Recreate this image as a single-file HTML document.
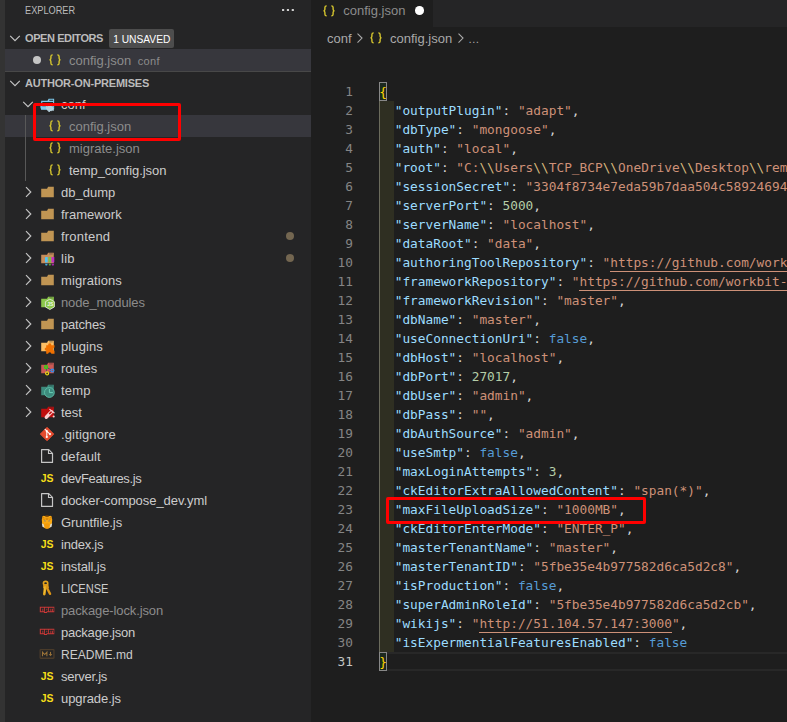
<!DOCTYPE html>
<html lang="en"><head><meta charset="utf-8"><title>config.json - author-on-premises</title>
<style>
*{box-sizing:border-box;margin:0;padding:0}
html,body{width:787px;height:722px;overflow:hidden;background:#1e1e1e}
body{position:relative;font-family:"Liberation Sans",sans-serif;font-size:13px;color:#ccc;-webkit-font-smoothing:antialiased}
.act{position:absolute;left:0;top:0;width:5px;height:722px;background:#333}
.side{position:absolute;left:5px;top:0;width:306px;height:722px;background:#252526;overflow:hidden}
.ttl{position:absolute;left:20px;top:3px;font-size:11px;line-height:14px;color:#bbb;transform-origin:0 0;transform:scaleX(.835);white-space:nowrap}
.more{position:absolute;left:276px;top:0;font-size:16px;line-height:16px;color:#c5c5c5;letter-spacing:1px;font-weight:700}
.hdr{position:absolute;left:0;width:306px;height:22px;font-size:11px;font-weight:700;line-height:22px;color:#bbb}
.hdr span.t{position:absolute;left:20px;top:0;white-space:nowrap}
.badge{position:absolute;left:104px;top:2px;width:65px;height:19px;border-radius:2px;background:#4d4d4d;color:#fff;font-weight:400;font-size:11px;line-height:20px;text-align:center}
.row{position:absolute;left:0;width:306px;height:22px}
.row.sel{background:#37373d}
.ic{position:absolute;overflow:visible}
.lbl{position:absolute;top:1px;line-height:22px;white-space:nowrap;color:#ccc}
.lbl.dim{color:#8c8c8c}
.desc{font-size:11px;color:#8c8c8c;margin-left:6.5px;letter-spacing:.35px}
.dot{position:absolute;left:281px;top:7px;width:8px;height:8px;border-radius:50%;background:#736650}
.guide{position:absolute;left:20px;top:115px;width:1px;height:66px;background:#585858}
.udot{position:absolute;border-radius:50%}
.ed{position:absolute;left:311px;top:0;width:476px;height:722px;background:#1e1e1e;overflow:hidden}
.tabs{position:absolute;left:0;top:0;width:476px;height:27px;background:#252526}
.tab{position:absolute;left:0;top:0;width:122px;height:27px;background:#1e1e1e}
.tab .lbl{left:32.3px;top:0px;color:#8c8c8c}
.bc{position:absolute;left:0;top:27px;width:476px;height:22px;line-height:22px;color:#a9a9a9}
.bc span{position:absolute;top:1px;white-space:nowrap}
.ln{position:absolute;left:0;width:42px;height:19px;text-align:right;color:#858585}
.ln.cur{color:#c6c6c6}
.ln,.cl{font-family:"DejaVu Sans Mono","Liberation Mono",monospace;font-size:12.8px;line-height:19px;letter-spacing:-0.006px;white-space:pre}
.cl{position:absolute;left:68.3px;height:19px;color:#d4d4d4}
.k{color:#9cdcfe}.s{color:#ce9178}.n{color:#b5cea8}.b{color:#569cd6}.p{color:#d4d4d4}.e{color:#d7ba7d}.br{color:#ffd700}
.u{display:inline-block;height:19px;vertical-align:top;border-bottom:1px solid #ce9178}
.band{position:absolute;left:68px;top:101px;width:15px;height:551px;background:#2f2f22;border-left:1px solid #6b6b5c}
.curline{position:absolute;left:68px;top:652px;width:408px;height:19px;border-top:2px solid #282828;border-bottom:2px solid #282828}
.bm{position:absolute;left:68px;width:8px;height:19px;border:1px solid #888;background:#1c291f}
.red{position:absolute;border:3px solid #ff0000;border-radius:2px}
</style></head><body>
<div class="act"></div>
<div class="side">
  <div class="ttl">EXPLORER</div>
  <svg class="ic" style="left:276px;top:2px" width="16" height="16" viewBox="0 0 16 16"><rect x="1" y="6.900" width="2.200" height="2.200" rx=".4" fill="#d0d0d0"/><rect x="5.850" y="6.900" width="2.200" height="2.200" rx=".4" fill="#d0d0d0"/><rect x="10.700" y="6.900" width="2.200" height="2.200" rx=".4" fill="#d0d0d0"/></svg>
  <div class="hdr" style="top:27px"><svg class="ic" style="left:2px;top:3px" width="16" height="16" viewBox="0 0 16 16"><path d="M3.2 5.8L8 10.6 12.8 5.8" fill="none" stroke="#c5c5c5" stroke-width="1.15"/></svg><span class="t" style="letter-spacing:-0.41px">OPEN EDITORS</span><span class="badge"><span style="display:inline-block;transform:scaleX(.93)">1 UNSAVED</span></span></div>
  <div class="row sel" style="top:49px"><i class="udot" style="left:28px;top:6.700px;width:8px;height:8px;background:#c5c5c5"></i><svg class="ic" style="left:42px;top:3px" width="16" height="16" viewBox="0 0 16 16"><path d="M5.700 2.900C4.300 2.900 3.900 3.500 3.900 4.600V6.300C3.900 7.300 3.400 7.750 2.600 7.900 3.400 8.050 3.900 8.500 3.900 9.500V11.200C3.900 12.300 4.300 12.900 5.700 12.900" fill="none" stroke="#d6c62e" stroke-width="1.400"/><path d="M10.300 2.900C11.700 2.900 12.100 3.500 12.100 4.600V6.300C12.100 7.300 12.600 7.750 13.400 7.900 12.600 8.050 12.100 8.500 12.100 9.500V11.200C12.100 12.300 11.700 12.900 10.300 12.900" fill="none" stroke="#d6c62e" stroke-width="1.400"/></svg><span class="lbl dim" style="left:64px">config.json<span class="desc">conf</span></span></div>
  <div class="hdr" style="top:71px;border-top:1px solid #484848"><svg class="ic" style="left:2px;top:3px" width="16" height="16" viewBox="0 0 16 16"><path d="M3.2 5.8L8 10.6 12.8 5.8" fill="none" stroke="#c5c5c5" stroke-width="1.15"/></svg><span class="t" style="top:0px;letter-spacing:-0.2px">AUTHOR-ON-PREMISES</span></div>
<div class="row" style="top:93px"><svg class="ic" style="left:15px;top:3px" width="16" height="16" viewBox="0 0 16 16"><path d="M3.2 5.8L8 10.6 12.8 5.8" fill="none" stroke="#c5c5c5" stroke-width="1.15"/></svg><svg class="ic" style="left:34px;top:3px" width="16" height="16" viewBox="0 0 32 32"><path d="M28.2,5.5H19.2L17.1,9.7H4.3V26.5H30.3V5.5Zm0,18.7H6.6V11.8H28.2Zm0-14.5H20.2l1-2.1h7Z" fill="#7ec9ec"/><path d="M27.7,20.5H2.2L4.3,27.5H30.3Z" fill="#7ec9ec"/><path d="M22.5 16.5l1.6 2.2 2.6-.9 1.4 2.3 2.7.3.2 2.7 2.3 1.4-1 2.5 1.6 2.2-1.9 1.9-2.3-1.3-2 1.9-2.5-1-.9 2.6-2.7-.3-.6-2.6-2.7-.4-.1-2.7-2.4-1.3 1-2.5-1.6-2.2 2-1.8 2.3 1.300 2-1.800 2.500 1z" fill="#b4cfdb" transform="translate(-0.5 2.2) scale(.9)"/></svg><span class="lbl" style="left:56px">conf</span></div>
<div class="row sel" style="top:115px"><svg class="ic" style="left:42px;top:3px" width="16" height="16" viewBox="0 0 16 16"><path d="M5.700 2.900C4.300 2.900 3.900 3.500 3.900 4.600V6.300C3.900 7.300 3.400 7.750 2.600 7.900 3.400 8.050 3.900 8.500 3.900 9.500V11.200C3.900 12.300 4.300 12.900 5.700 12.900" fill="none" stroke="#d6c62e" stroke-width="1.400"/><path d="M10.300 2.900C11.700 2.900 12.100 3.500 12.100 4.600V6.300C12.100 7.300 12.600 7.750 13.400 7.900 12.600 8.050 12.100 8.500 12.100 9.500V11.200C12.100 12.300 11.700 12.900 10.300 12.900" fill="none" stroke="#d6c62e" stroke-width="1.400"/></svg><span class="lbl dim" style="left:64px">config.json</span></div>
<div class="row" style="top:137px"><svg class="ic" style="left:42px;top:3px" width="16" height="16" viewBox="0 0 16 16"><path d="M5.700 2.900C4.300 2.900 3.900 3.500 3.900 4.600V6.300C3.900 7.300 3.400 7.750 2.600 7.900 3.400 8.050 3.900 8.500 3.900 9.500V11.200C3.900 12.300 4.300 12.900 5.700 12.900" fill="none" stroke="#d6c62e" stroke-width="1.400"/><path d="M10.300 2.900C11.700 2.900 12.100 3.500 12.100 4.600V6.300C12.100 7.300 12.600 7.750 13.400 7.900 12.600 8.050 12.100 8.500 12.100 9.500V11.200C12.100 12.300 11.700 12.900 10.300 12.900" fill="none" stroke="#d6c62e" stroke-width="1.400"/></svg><span class="lbl dim" style="left:64px">migrate.json</span></div>
<div class="row" style="top:159px"><svg class="ic" style="left:42px;top:3px" width="16" height="16" viewBox="0 0 16 16"><path d="M5.700 2.900C4.300 2.900 3.900 3.500 3.900 4.600V6.300C3.900 7.300 3.400 7.750 2.600 7.900 3.400 8.050 3.900 8.500 3.900 9.500V11.200C3.900 12.300 4.300 12.900 5.700 12.900" fill="none" stroke="#d6c62e" stroke-width="1.400"/><path d="M10.300 2.900C11.700 2.900 12.100 3.500 12.100 4.600V6.300C12.100 7.300 12.600 7.750 13.400 7.900 12.600 8.050 12.100 8.500 12.100 9.500V11.200C12.100 12.300 11.700 12.900 10.300 12.900" fill="none" stroke="#d6c62e" stroke-width="1.400"/></svg><span class="lbl" style="left:64px;letter-spacing:-0.06px">temp_config.json</span></div>
<div class="row" style="top:181px"><svg class="ic" style="left:14.5px;top:3px" width="16" height="16" viewBox="0 0 16 16"><path d="M6 3.2L10.8 8 6 12.8" fill="none" stroke="#c5c5c5" stroke-width="1.15"/></svg><svg class="ic" style="left:34px;top:3px" width="16" height="16" viewBox="0 0 32 32"><path d="M27.5,5.5H18.2L16.1,9.7H4.4V26.5H29.6V5.5Z" fill="#c09553"/></svg><span class="lbl" style="left:56px">db_dump</span></div>
<div class="row" style="top:203px"><svg class="ic" style="left:14.5px;top:3px" width="16" height="16" viewBox="0 0 16 16"><path d="M6 3.2L10.8 8 6 12.8" fill="none" stroke="#c5c5c5" stroke-width="1.15"/></svg><svg class="ic" style="left:34px;top:3px" width="16" height="16" viewBox="0 0 32 32"><path d="M27.5,5.5H18.2L16.1,9.7H4.4V26.5H29.6V5.5Z" fill="#c09553"/></svg><span class="lbl" style="left:56px">framework</span></div>
<div class="row" style="top:225px"><svg class="ic" style="left:14.5px;top:3px" width="16" height="16" viewBox="0 0 16 16"><path d="M6 3.2L10.8 8 6 12.8" fill="none" stroke="#c5c5c5" stroke-width="1.15"/></svg><svg class="ic" style="left:34px;top:3px" width="16" height="16" viewBox="0 0 32 32"><path d="M27.5,5.5H18.2L16.1,9.7H4.4V26.5H29.6V5.5Z" fill="#c09553"/></svg><span class="lbl" style="left:56px;letter-spacing:0.19px">frontend</span><i class="dot"></i></div>
<div class="row" style="top:247px"><svg class="ic" style="left:14.5px;top:3px" width="16" height="16" viewBox="0 0 16 16"><path d="M6 3.2L10.8 8 6 12.8" fill="none" stroke="#c5c5c5" stroke-width="1.15"/></svg><svg class="ic" style="left:34px;top:3px" width="16" height="16" viewBox="0 0 32 32"><path d="M27.5,5.5H18.2L16.1,9.7H4.4V26.5H29.6V5.5Z" fill="#c68d5b"/><rect x="20.5" y="7.200" width="7" height="1.300" fill="#252526" opacity=".75"/><rect x="12" y="14" width="5.4" height="11" rx="0.8" fill="#4fc3f7"/><rect x="19.2" y="14" width="5" height="11" rx="0.8" fill="#7bc043"/><rect x="25" y="14" width="5.6" height="11" rx="0.8" fill="#c030c0"/><path d="M12 27.6h5.4l-1.2 3.2h-3z" fill="#3fa9dc"/><path d="M19.2 27.6h5l-1.100 3.200h-2.800z" fill="#68a838"/><path d="M25 27.600h5.600l-1.200 3.200h-3.200z" fill="#a828a8"/></svg><span class="lbl" style="left:56px;letter-spacing:0.26px">lib</span><i class="dot"></i></div>
<div class="row" style="top:269px"><svg class="ic" style="left:14.5px;top:3px" width="16" height="16" viewBox="0 0 16 16"><path d="M6 3.2L10.8 8 6 12.8" fill="none" stroke="#c5c5c5" stroke-width="1.15"/></svg><svg class="ic" style="left:34px;top:3px" width="16" height="16" viewBox="0 0 32 32"><path d="M27.5,5.5H18.2L16.1,9.7H4.4V26.5H29.6V5.5Z" fill="#c09553"/></svg><span class="lbl" style="left:56px;letter-spacing:0.1px">migrations</span></div>
<div class="row" style="top:291px"><svg class="ic" style="left:14.5px;top:3px" width="16" height="16" viewBox="0 0 16 16"><path d="M6 3.2L10.8 8 6 12.8" fill="none" stroke="#c5c5c5" stroke-width="1.15"/></svg><svg class="ic" style="left:34px;top:3px" width="16" height="16" viewBox="0 0 32 32"><path d="M27.5,5.5H18.2L16.1,9.7H4.4V26.5H29.6V5.5Z" fill="#8cc84b"/><rect x="20.5" y="7.200" width="7" height="1.300" fill="#252526" opacity=".75"/><path d="M21.800 10.200l9 5.200v10.400l-9 5.200-9-5.200v-10.400z" fill="#8cc84b" stroke="#e4ecdc" stroke-width="1.700" stroke-linejoin="round"/><text x="22.6" y="24.6" font-family="Liberation Sans,sans-serif" font-size="10" font-weight="700" fill="#eef6e6" text-anchor="middle">JS</text></svg><span class="lbl dim" style="left:56px;letter-spacing:-0.12px">node_modules</span></div>
<div class="row" style="top:313px"><svg class="ic" style="left:14.5px;top:3px" width="16" height="16" viewBox="0 0 16 16"><path d="M6 3.2L10.8 8 6 12.8" fill="none" stroke="#c5c5c5" stroke-width="1.15"/></svg><svg class="ic" style="left:34px;top:3px" width="16" height="16" viewBox="0 0 32 32"><path d="M27.5,5.5H18.2L16.1,9.7H4.4V26.5H29.6V5.5Z" fill="#c09553"/></svg><span class="lbl" style="left:56px;letter-spacing:-0.18px">patches</span></div>
<div class="row" style="top:335px"><svg class="ic" style="left:14.5px;top:3px" width="16" height="16" viewBox="0 0 16 16"><path d="M6 3.2L10.8 8 6 12.8" fill="none" stroke="#c5c5c5" stroke-width="1.15"/></svg><svg class="ic" style="left:34px;top:3px" width="16" height="16" viewBox="0 0 32 32"><path d="M27.5,5.5H18.2L16.1,9.7H4.4V26.5H29.6V5.5Z" fill="#fdbe63"/><rect x="20.5" y="7.200" width="7" height="1.300" fill="#252526" opacity=".75"/><path d="M14.4 14.600H18.500A3.100 3.100 0 1 1 24.500 14.600H31V19A3.200 3.200 0 1 0 31 25.400V31.500H24.700A3.200 3.200 0 1 0 18.300 31.500H14.400V25.200A3.100 3.100 0 1 1 14.400 19Z" fill="#ef7000"/></svg><span class="lbl" style="left:56px;letter-spacing:0.1px">plugins</span></div>
<div class="row" style="top:357px"><svg class="ic" style="left:14.5px;top:3px" width="16" height="16" viewBox="0 0 16 16"><path d="M6 3.2L10.8 8 6 12.8" fill="none" stroke="#c5c5c5" stroke-width="1.15"/></svg><svg class="ic" style="left:34px;top:3px" width="16" height="16" viewBox="0 0 32 32"><path d="M27.5,5.5H18.2L16.1,9.7H4.4V26.5H29.6V5.5Z" fill="#cb5a55"/><rect x="20.5" y="7.200" width="7" height="1.300" fill="#252526" opacity=".75"/><path d="M14.100 14.300L16.200 26.800M14.100 14.300L26.900 21M16.200 26.800L26.900 21" stroke="#3a3f78" stroke-width="1.500" fill="none"/><circle cx="14.100" cy="14.300" r="2.900" fill="#b0703a" stroke="#22e010" stroke-width="2.400"/><circle cx="26.900" cy="21" r="2.900" fill="#c0504a" stroke="#2f90ee" stroke-width="2.400"/><circle cx="16.200" cy="26.800" r="2.900" fill="#3a2a10" stroke="#f2dc1a" stroke-width="2.400"/></svg><span class="lbl" style="left:56px">routes</span></div>
<div class="row" style="top:379px"><svg class="ic" style="left:14.5px;top:3px" width="16" height="16" viewBox="0 0 16 16"><path d="M6 3.2L10.8 8 6 12.8" fill="none" stroke="#c5c5c5" stroke-width="1.15"/></svg><svg class="ic" style="left:34px;top:3px" width="16" height="16" viewBox="0 0 32 32"><path d="M27.5,5.5H18.2L16.1,9.7H4.4V26.5H29.6V5.5Z" fill="#3d8b7d"/><rect x="20.5" y="7.200" width="7" height="1.300" fill="#252526" opacity=".75"/><circle cx="20.800" cy="21" r="9.800" fill="#3d8b7d" stroke="#5fc0a9" stroke-width="1.800"/><path d="M20.800 14v7.200h7" stroke="#6fd6bd" stroke-width="1.800" fill="none"/></svg><span class="lbl" style="left:56px;letter-spacing:0.2px">temp</span></div>
<div class="row" style="top:401px"><svg class="ic" style="left:14.5px;top:3px" width="16" height="16" viewBox="0 0 16 16"><path d="M6 3.2L10.8 8 6 12.8" fill="none" stroke="#c5c5c5" stroke-width="1.15"/></svg><svg class="ic" style="left:34px;top:3px" width="16" height="16" viewBox="0 0 32 32"><path d="M27.5,5.5H18.2L16.1,9.7H4.4V26.5H29.6V5.5Z" fill="#c00e0e"/><rect x="20.5" y="7.200" width="7" height="1.300" fill="#252526" opacity=".75"/><path d="M25 15.500L14.500 26.500" stroke="#f9cfcf" stroke-width="6.600" stroke-linecap="round"/><path d="M25.500 15L20.500 20" stroke="#c00e0e" stroke-width="3.200"/><path d="M21.500 10.800L30.200 17.600" stroke="#f9cfcf" stroke-width="2.200" stroke-linecap="round"/><circle cx="29.400" cy="25" r="2.100" fill="#f9cfcf"/></svg><span class="lbl" style="left:56px">test</span></div>
<div class="row" style="top:423px"><svg class="ic" style="left:34px;top:3px" width="16" height="16" viewBox="0 0 32 32"><path d="M16.100 2.700L29.500 16.100 16.100 29.500 2.700 16.100z" fill="#e44c30" stroke="#e44c30" stroke-width="2" stroke-linejoin="round"/><path d="M11.500 6l4.100 4.100v12M15.600 10.100l6.300 6" stroke="#fff" stroke-width="2.100" fill="none"/><circle cx="15.600" cy="10.300" r="2.100" fill="#fff"/><circle cx="15.600" cy="22" r="2.200" fill="#fff"/><circle cx="22" cy="16.200" r="2.200" fill="#fff"/></svg><span class="lbl" style="left:56px;letter-spacing:0.14px">.gitignore</span></div>
<div class="row" style="top:445px"><svg class="ic" style="left:34px;top:3px" width="16" height="16" viewBox="0 0 32 32"><path d="M5.200 3.200H19.500L27 10.800V28.800H5.200Z" fill="none" stroke="#c5c5c5" stroke-width="2.400" stroke-linejoin="round"/><path d="M19 3.500V11H26.500" fill="none" stroke="#c5c5c5" stroke-width="2.200"/></svg><span class="lbl" style="left:56px;letter-spacing:0.11px">default</span></div>
<div class="row" style="top:467px"><svg class="ic" style="left:34px;top:3px" width="16" height="16" viewBox="0 0 32 32"><text x="3.400" y="24.200" font-family="Liberation Sans,sans-serif" font-size="21.800" font-weight="700" fill="#f5de19" textLength="25.600" lengthAdjust="spacingAndGlyphs">JS</text></svg><span class="lbl" style="left:56px;letter-spacing:-0.35px">devFeatures.js</span></div>
<div class="row" style="top:489px"><svg class="ic" style="left:34px;top:3px" width="16" height="16" viewBox="0 0 32 32"><path d="M5.200 3.200H19.500L27 10.800V28.800H5.200Z" fill="none" stroke="#c5c5c5" stroke-width="2.400" stroke-linejoin="round"/><path d="M19 3.500V11H26.500" fill="none" stroke="#c5c5c5" stroke-width="2.200"/></svg><span class="lbl" style="left:56px;letter-spacing:-0.05px">docker-compose_dev.yml</span></div>
<div class="row" style="top:511px"><svg class="ic" style="left:34px;top:3px" width="16" height="16" viewBox="0 0 32 32"><path d="M7 4.500Q9 2.500 11.500 4Q16 2.500 20.500 4Q23 2.500 25 4.500L26.400 11L25.800 19L22.500 27Q16 32 9.500 27L6.200 19L5.600 11Z" fill="#f9a812"/><path d="M12 3.300Q16 1.800 20 3.300L19 5.500H13Z" fill="#6a3a08"/><path d="M6.500 5.500L11 8M25.500 5.500L21 8M7 9.500L11.500 11M25 9.500L20.500 11M13 8.500H19M13.500 10.800H18.500" stroke="#c67608" stroke-width="1.300"/><path d="M10.500 20L11.500 27Q16 31 20.500 27L21.500 20Q16 17 10.500 20Z" fill="#f29a0c"/><path d="M5.800 18.500L6.800 25.500L10.800 27.200L9.600 21Z" fill="#e2dccd"/><path d="M26.200 18.500L25.200 25.500L21.200 27.200L22.400 21Z" fill="#e2dccd"/><ellipse cx="11.700" cy="13.800" rx="1.900" ry="1.300" fill="#9a8468" transform="rotate(25 11.700 13.800)"/><ellipse cx="20.300" cy="13.800" rx="1.900" ry="1.300" fill="#9a8468" transform="rotate(-25 20.300 13.800)"/></svg><span class="lbl" style="left:56px;letter-spacing:-0.09px">Gruntfile.js</span></div>
<div class="row" style="top:533px"><svg class="ic" style="left:34px;top:3px" width="16" height="16" viewBox="0 0 32 32"><text x="3.400" y="24.200" font-family="Liberation Sans,sans-serif" font-size="21.800" font-weight="700" fill="#f5de19" textLength="25.600" lengthAdjust="spacingAndGlyphs">JS</text></svg><span class="lbl" style="left:56px;letter-spacing:-0.22px">index.js</span></div>
<div class="row" style="top:555px"><svg class="ic" style="left:34px;top:3px" width="16" height="16" viewBox="0 0 32 32"><text x="3.400" y="24.200" font-family="Liberation Sans,sans-serif" font-size="21.800" font-weight="700" fill="#f5de19" textLength="25.600" lengthAdjust="spacingAndGlyphs">JS</text></svg><span class="lbl" style="left:56px;letter-spacing:-0.15px">install.js</span></div>
<div class="row" style="top:577px"><svg class="ic" style="left:34px;top:3px" width="16" height="16" viewBox="0 0 32 32"><ellipse cx="13.200" cy="6.300" rx="4.300" ry="3.600" fill="none" stroke="#e5a51e" stroke-width="3.200"/><path d="M8.300 8.500H18.600L20 16.500H8.300Z" fill="#dc981a"/><path d="M12.200 15L10.600 28.300" stroke="#e8aa20" stroke-width="5.200" stroke-linecap="round"/><path d="M15.500 15L22 27.600" stroke="#dc9416" stroke-width="5" stroke-linecap="round"/><path d="M12 13L11 26" stroke="#f6cf4a" stroke-width="1.200"/></svg><span class="lbl" style="left:56px;transform-origin:0 50%;transform:scaleX(0.853)">LICENSE</span></div>
<div class="row" style="top:599px"><svg class="ic" style="left:34px;top:3px" width="16" height="16" viewBox="0 0 32 32"><path fill-rule="evenodd" d="M1.600,9.600H30.600V20.400H16V22.200H9.900V20.400H1.600ZM3.700,18.300H6.900V13.400H8.500V18.300H10.100V11.700H3.700ZM11.700,11.700V20H14.900V18.300H18.100V11.700ZM14.900,13.400H16.500V16.600H14.900ZM19.700,11.700V18.300H22.900V13.400H24.500V18.300H26.100V13.400H27.700V18.300H29.300V11.700Z" fill="#cb3837"/></svg><span class="lbl dim" style="left:56px;letter-spacing:-0.12px">package-lock.json</span></div>
<div class="row" style="top:621px"><svg class="ic" style="left:34px;top:3px" width="16" height="16" viewBox="0 0 32 32"><path fill-rule="evenodd" d="M1.600,9.600H30.600V20.400H16V22.200H9.900V20.400H1.600ZM3.700,18.300H6.900V13.400H8.500V18.300H10.100V11.700H3.700ZM11.700,11.700V20H14.900V18.300H18.100V11.700ZM14.900,13.400H16.500V16.600H14.900ZM19.700,11.700V18.300H22.900V13.400H24.500V18.300H26.100V13.400H27.700V18.300H29.300V11.700Z" fill="#cb3837"/></svg><span class="lbl" style="left:56px;letter-spacing:-0.21px">package.json</span></div>
<div class="row" style="top:643px"><svg class="ic" style="left:34px;top:3px" width="16" height="16" viewBox="0 0 32 32"><rect x="2.300" y="7.300" width="27.600" height="17.200" rx="1" fill="none" stroke="#4a3b2a" stroke-width="2.600"/><path d="M7 20.400v-8.200l4.400 4.800 4.400-4.800v8.200" fill="none" stroke="#9a7238" stroke-width="2.200"/><path d="M23 11.800v5" fill="none" stroke="#9a7238" stroke-width="2.200"/><path d="M19.400 16.200h7.200l-3.600 4.300z" fill="#9a7238"/></svg><span class="lbl" style="left:56px;transform-origin:0 50%;transform:scaleX(0.928)">README.md</span></div>
<div class="row" style="top:665px"><svg class="ic" style="left:34px;top:3px" width="16" height="16" viewBox="0 0 32 32"><text x="3.400" y="24.200" font-family="Liberation Sans,sans-serif" font-size="21.800" font-weight="700" fill="#f5de19" textLength="25.600" lengthAdjust="spacingAndGlyphs">JS</text></svg><span class="lbl" style="left:56px;letter-spacing:-0.26px">server.js</span></div>
<div class="row" style="top:687px"><svg class="ic" style="left:34px;top:3px" width="16" height="16" viewBox="0 0 32 32"><text x="3.400" y="24.200" font-family="Liberation Sans,sans-serif" font-size="21.800" font-weight="700" fill="#f5de19" textLength="25.600" lengthAdjust="spacingAndGlyphs">JS</text></svg><span class="lbl" style="left:56px;letter-spacing:-0.08px">upgrade.js</span></div>
  <div class="guide"></div>
</div>
<div class="ed">
  <div class="tabs"><div class="tab"><svg class="ic" style="left:10px;top:2.7px" width="16" height="16" viewBox="0 0 16 16"><path d="M5.700 2.900C4.300 2.900 3.900 3.500 3.900 4.600V6.300C3.900 7.300 3.400 7.750 2.600 7.900 3.400 8.050 3.900 8.500 3.900 9.500V11.200C3.900 12.300 4.300 12.900 5.700 12.900" fill="none" stroke="#d6c62e" stroke-width="1.400"/><path d="M10.300 2.900C11.700 2.900 12.100 3.500 12.100 4.600V6.300C12.100 7.300 12.600 7.750 13.400 7.900 12.600 8.050 12.100 8.500 12.100 9.500V11.200C12.100 12.300 11.700 12.900 10.300 12.900" fill="none" stroke="#d6c62e" stroke-width="1.400"/></svg><span class="lbl dim">config.json</span><i class="udot" style="left:104.200px;top:6.100px;width:8.700px;height:8.700px;background:#fff"></i></div></div>
  <div class="bc"><span style="left:16px">conf</span><svg class="ic" style="left:41px;top:3px" width="16" height="16" viewBox="0 0 16 16"><path d="M5.5 3.6L10 8.1 5.5 12.6" fill="none" stroke="#a9a9a9" stroke-width="1.1"/></svg><svg class="ic" style="left:56.5px;top:3px" width="16" height="16" viewBox="0 0 16 16"><path d="M5.700 2.900C4.300 2.900 3.900 3.500 3.900 4.600V6.300C3.900 7.300 3.400 7.750 2.600 7.900 3.400 8.050 3.900 8.500 3.900 9.500V11.200C3.900 12.300 4.300 12.900 5.700 12.900" fill="none" stroke="#d6c62e" stroke-width="1.400"/><path d="M10.300 2.900C11.700 2.900 12.100 3.500 12.100 4.600V6.300C12.100 7.300 12.600 7.750 13.400 7.900 12.600 8.050 12.100 8.500 12.100 9.500V11.200C12.100 12.300 11.700 12.900 10.300 12.900" fill="none" stroke="#d6c62e" stroke-width="1.400"/></svg><span style="left:79px">config.json</span><svg class="ic" style="left:142px;top:3px" width="16" height="16" viewBox="0 0 16 16"><path d="M5.5 3.6L10 8.1 5.5 12.6" fill="none" stroke="#a9a9a9" stroke-width="1.1"/></svg><span style="left:157px;font-size:11.5px">…</span></div>
  <div class="band"></div>
  <div class="curline"></div>
  <div class="bm" style="top:82px"></div>
  <div class="bm" style="top:652px"></div>
<div class="ln" style="top:82px">1</div><div class="cl" style="top:82px"><span class="br">{</span></div>
<div class="ln" style="top:101px">2</div><div class="cl" style="top:101px">  <span class="k">&quot;outputPlugin&quot;</span><span class="p">: </span><span class="s">&quot;adapt&quot;</span><span class="p">,</span></div>
<div class="ln" style="top:120px">3</div><div class="cl" style="top:120px">  <span class="k">&quot;dbType&quot;</span><span class="p">: </span><span class="s">&quot;mongoose&quot;</span><span class="p">,</span></div>
<div class="ln" style="top:139px">4</div><div class="cl" style="top:139px">  <span class="k">&quot;auth&quot;</span><span class="p">: </span><span class="s">&quot;local&quot;</span><span class="p">,</span></div>
<div class="ln" style="top:158px">5</div><div class="cl" style="top:158px">  <span class="k">&quot;root&quot;</span><span class="p">: </span><span class="s">&quot;C:<span class="e">\\</span>Users<span class="e">\\</span>TCP_BCP<span class="e">\\</span>OneDrive<span class="e">\\</span>Desktop<span class="e">\\</span>remote<span class="e">\\</span>adapt_authoring&quot;</span><span class="p">,</span></div>
<div class="ln" style="top:177px">6</div><div class="cl" style="top:177px">  <span class="k">&quot;sessionSecret&quot;</span><span class="p">: </span><span class="s">&quot;3304f8734e7eda59b7daa504c58924694d1e7c0a&quot;</span><span class="p">,</span></div>
<div class="ln" style="top:196px">7</div><div class="cl" style="top:196px">  <span class="k">&quot;serverPort&quot;</span><span class="p">: </span><span class="n">5000</span><span class="p">,</span></div>
<div class="ln" style="top:215px">8</div><div class="cl" style="top:215px">  <span class="k">&quot;serverName&quot;</span><span class="p">: </span><span class="s">&quot;localhost&quot;</span><span class="p">,</span></div>
<div class="ln" style="top:234px">9</div><div class="cl" style="top:234px">  <span class="k">&quot;dataRoot&quot;</span><span class="p">: </span><span class="s">&quot;data&quot;</span><span class="p">,</span></div>
<div class="ln" style="top:253px">10</div><div class="cl" style="top:253px">  <span class="k">&quot;authoringToolRepository&quot;</span><span class="p">: </span><span class="s">"<span class="u">https://github.com/workbit-in/adapt_authoring.git</span>"</span><span class="p">,</span></div>
<div class="ln" style="top:272px">11</div><div class="cl" style="top:272px">  <span class="k">&quot;frameworkRepository&quot;</span><span class="p">: </span><span class="s">"<span class="u">https://github.com/workbit-in/adapt_framework.git</span>"</span><span class="p">,</span></div>
<div class="ln" style="top:291px">12</div><div class="cl" style="top:291px">  <span class="k">&quot;frameworkRevision&quot;</span><span class="p">: </span><span class="s">&quot;master&quot;</span><span class="p">,</span></div>
<div class="ln" style="top:310px">13</div><div class="cl" style="top:310px">  <span class="k">&quot;dbName&quot;</span><span class="p">: </span><span class="s">&quot;master&quot;</span><span class="p">,</span></div>
<div class="ln" style="top:329px">14</div><div class="cl" style="top:329px">  <span class="k">&quot;useConnectionUri&quot;</span><span class="p">: </span><span class="b">false</span><span class="p">,</span></div>
<div class="ln" style="top:348px">15</div><div class="cl" style="top:348px">  <span class="k">&quot;dbHost&quot;</span><span class="p">: </span><span class="s">&quot;localhost&quot;</span><span class="p">,</span></div>
<div class="ln" style="top:367px">16</div><div class="cl" style="top:367px">  <span class="k">&quot;dbPort&quot;</span><span class="p">: </span><span class="n">27017</span><span class="p">,</span></div>
<div class="ln" style="top:386px">17</div><div class="cl" style="top:386px">  <span class="k">&quot;dbUser&quot;</span><span class="p">: </span><span class="s">&quot;admin&quot;</span><span class="p">,</span></div>
<div class="ln" style="top:405px">18</div><div class="cl" style="top:405px">  <span class="k">&quot;dbPass&quot;</span><span class="p">: </span><span class="s">&quot;&quot;</span><span class="p">,</span></div>
<div class="ln" style="top:424px">19</div><div class="cl" style="top:424px">  <span class="k">&quot;dbAuthSource&quot;</span><span class="p">: </span><span class="s">&quot;admin&quot;</span><span class="p">,</span></div>
<div class="ln" style="top:443px">20</div><div class="cl" style="top:443px">  <span class="k">&quot;useSmtp&quot;</span><span class="p">: </span><span class="b">false</span><span class="p">,</span></div>
<div class="ln" style="top:462px">21</div><div class="cl" style="top:462px">  <span class="k">&quot;maxLoginAttempts&quot;</span><span class="p">: </span><span class="n">3</span><span class="p">,</span></div>
<div class="ln" style="top:481px">22</div><div class="cl" style="top:481px">  <span class="k">&quot;ckEditorExtraAllowedContent&quot;</span><span class="p">: </span><span class="s">&quot;span(*)&quot;</span><span class="p">,</span></div>
<div class="ln" style="top:500px">23</div><div class="cl" style="top:500px">  <span class="k">&quot;maxFileUploadSize&quot;</span><span class="p">: </span><span class="s">&quot;1000MB&quot;</span><span class="p">,</span></div>
<div class="ln" style="top:519px">24</div><div class="cl" style="top:519px">  <span class="k">&quot;ckEditorEnterMode&quot;</span><span class="p">: </span><span class="s">&quot;ENTER_P&quot;</span><span class="p">,</span></div>
<div class="ln" style="top:538px">25</div><div class="cl" style="top:538px">  <span class="k">&quot;masterTenantName&quot;</span><span class="p">: </span><span class="s">&quot;master&quot;</span><span class="p">,</span></div>
<div class="ln" style="top:557px">26</div><div class="cl" style="top:557px">  <span class="k">&quot;masterTenantID&quot;</span><span class="p">: </span><span class="s">&quot;5fbe35e4b977582d6ca5d2c8&quot;</span><span class="p">,</span></div>
<div class="ln" style="top:576px">27</div><div class="cl" style="top:576px">  <span class="k">&quot;isProduction&quot;</span><span class="p">: </span><span class="b">false</span><span class="p">,</span></div>
<div class="ln" style="top:595px">28</div><div class="cl" style="top:595px">  <span class="k">&quot;superAdminRoleId&quot;</span><span class="p">: </span><span class="s">&quot;5fbe35e4b977582d6ca5d2cb&quot;</span><span class="p">,</span></div>
<div class="ln" style="top:614px">29</div><div class="cl" style="top:614px">  <span class="k">&quot;wikijs&quot;</span><span class="p">: </span><span class="s">"<span class="u">http://51.104.57.147:3000</span>"</span><span class="p">,</span></div>
<div class="ln" style="top:633px">30</div><div class="cl" style="top:633px">  <span class="k">&quot;isExpermentialFeaturesEnabled&quot;</span><span class="p">: </span><span class="b">false</span></div>
<div class="ln cur" style="top:652px">31</div><div class="cl" style="top:652px"><span class="br">}</span></div>
</div>
<div class="red" style="left:33px;top:103px;width:148px;height:38px"></div>
<div class="red" style="left:386px;top:497px;width:260px;height:27px"></div>
</body></html>
